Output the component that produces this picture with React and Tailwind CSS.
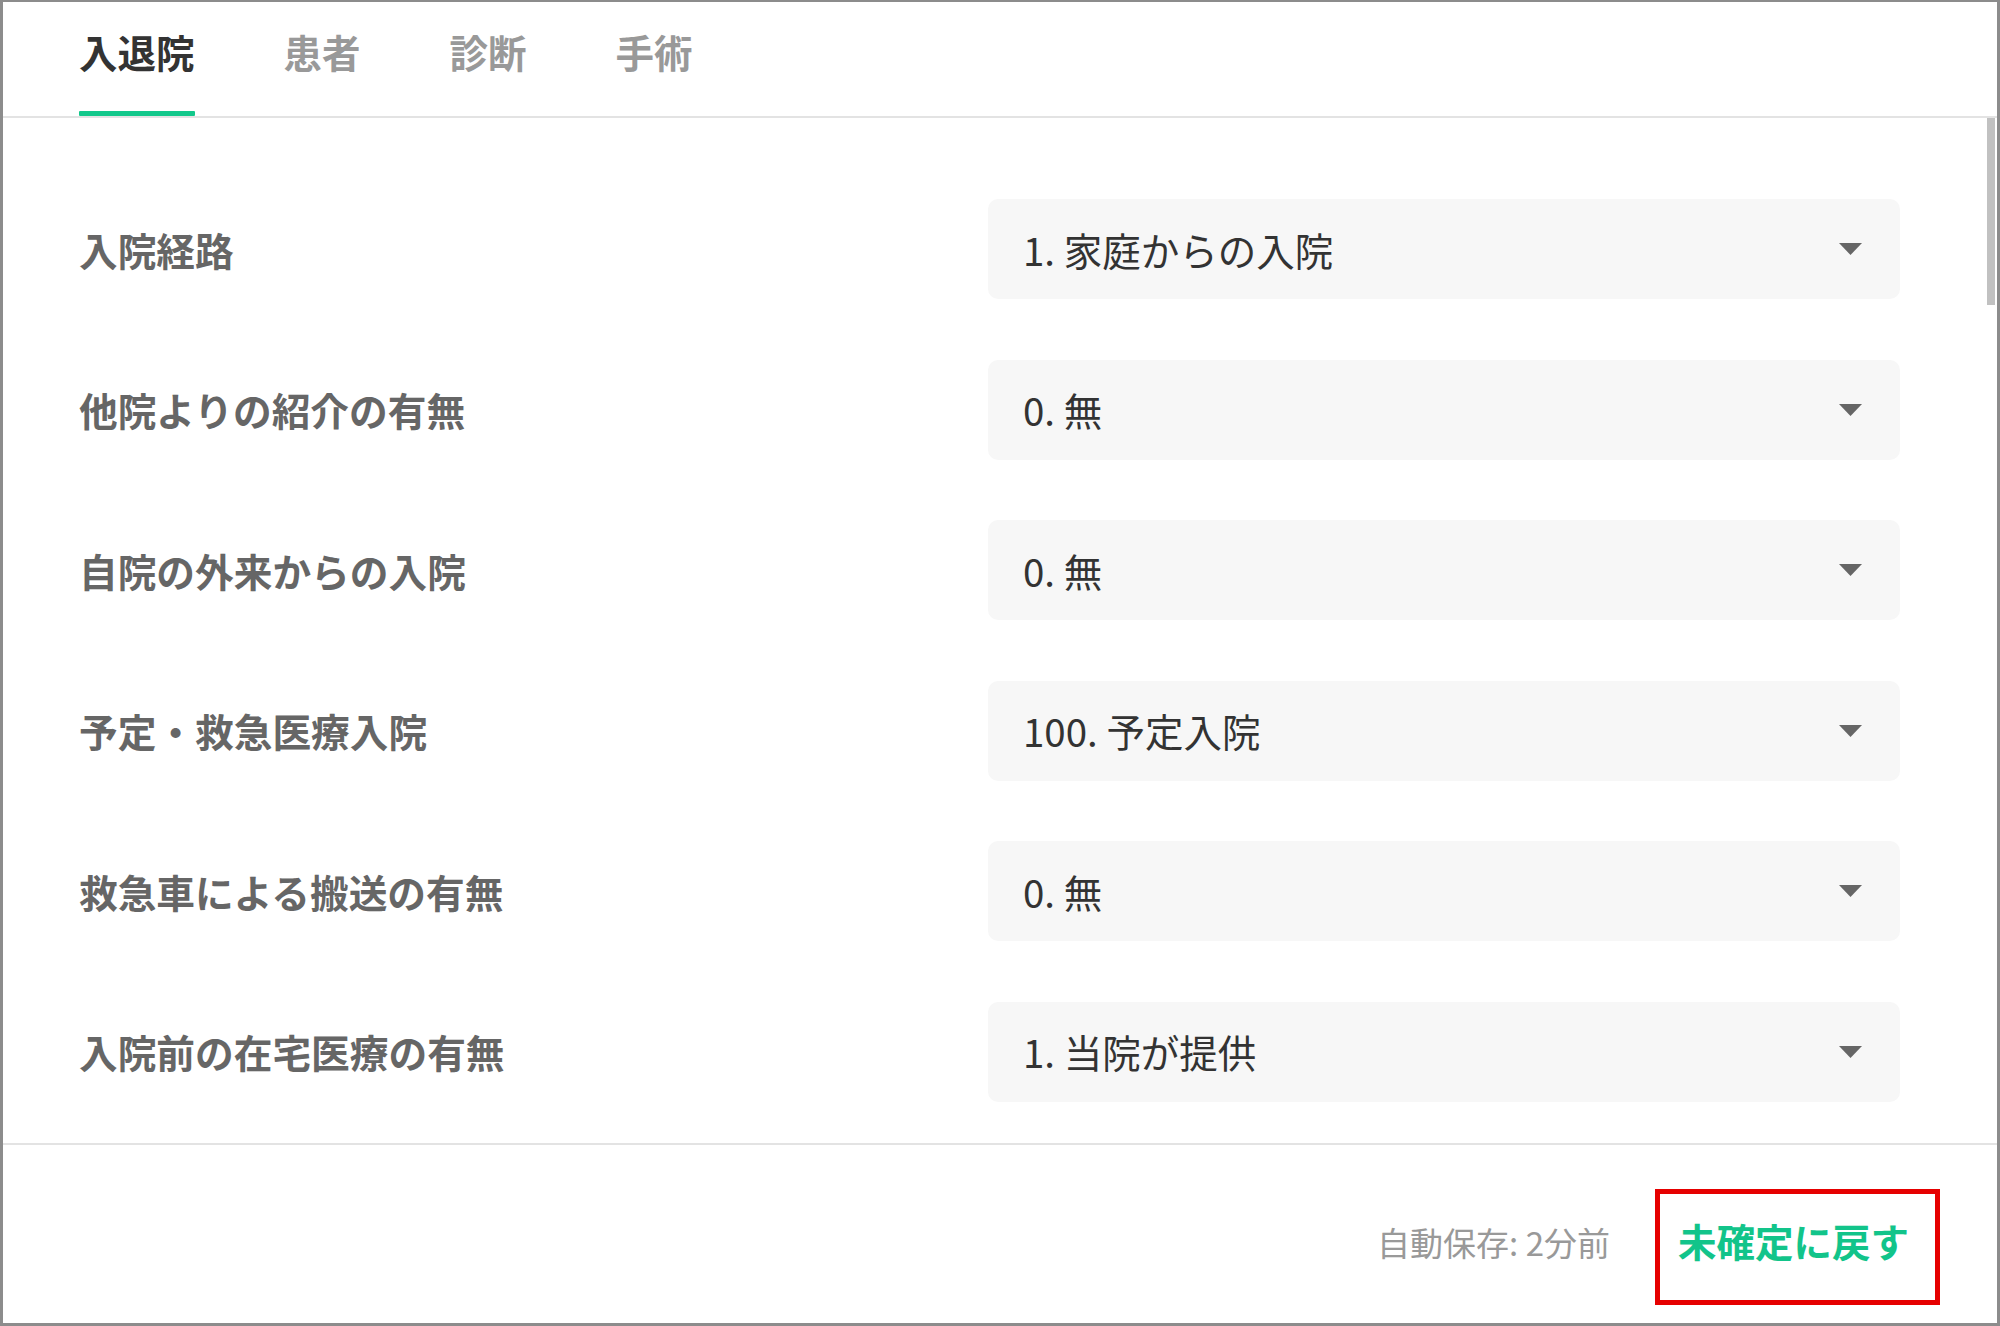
const tabs = ["入退院", "患者", "診断", "手術"];

const rows = [
  { label: "入院経路", value: "1. 家庭からの入院" },
  { label: "他院よりの紹介の有無", value: "0. 無" },
  { label: "自院の外来からの入院", value: "0. 無" },
  { label: "予定・救急医療入院", value: "100. 予定入院" },
  { label: "救急車による搬送の有無", value: "0. 無" },
  { label: "入院前の在宅医療の有無", value: "1. 当院が提供" },
];

const Caret = () => (
  <svg width="23" height="12" viewBox="0 0 23 12" className="shrink-0">
    <path d="M0 0 H23 L11.5 12 Z" fill="#666" />
  </svg>
);

const SelectRow = ({ label, value }) => (
  <div className="flex items-center justify-between h-[100px]">
    <span className="text-[38.7px] font-bold text-[#666] leading-none">{label}</span>
    <div className="w-[912px] h-[100px] rounded-[10px] bg-[#f7f7f7] flex items-center justify-between pl-[35px] pr-[38px]">
      <span className="text-[38.5px] text-[#333] leading-none">{value}</span>
      <Caret />
    </div>
  </div>
);

export default function App() {
  return (
    <div
      className="w-[2000px] h-[1326px] bg-white border-[3px] border-t-2 border-[#8c8c8c] flex flex-col overflow-hidden"
      style={{ fontFamily: '"Noto Sans CJK JP", "Noto Sans", sans-serif' }}
    >
      <div className="h-[116px] shrink-0 border-b-2 border-[#e3e3e3] flex px-[76px] gap-[89px]">
        {tabs.map((t, i) => (
          <div key={t} className="h-full flex flex-col">
            <div
              className={`flex-1 flex items-center pb-[10px] text-[38.5px] font-bold leading-none ${
                i === 0 ? "text-[#333]" : "text-[#999]"
              }`}
            >
              {t}
            </div>
            <div className={`h-[5px] rounded-[1px] ${i === 0 ? "bg-[#12c88b]" : ""}`} />
          </div>
        ))}
      </div>

      <div className="flex-1 relative overflow-hidden pl-[76px] pr-[97px] pt-[81px]">
        <div className="flex flex-col gap-[60.5px]">
          {rows.map((r) => (
            <SelectRow key={r.label} {...r} />
          ))}
        </div>
        <div className="absolute right-[2px] top-0 w-[8px] h-[187px] bg-[#c1c1c1]" />
      </div>

      <div className="h-[180px] shrink-0 border-t-2 border-[#e3e3e3] flex items-start justify-end gap-[45px] pr-[57px] pt-[44px]">
        <div className="h-[116px] flex items-center pb-[10px]">
          <span className="text-[33px] text-[#999] leading-none">自動保存: 2分前</span>
        </div>
        <div className="h-[116px] border-[5px] border-[#e60000] flex items-center pl-[18px] pr-[26px] pb-[14px]">
          <span className="text-[38.5px] font-bold text-[#12c48a] leading-none">未確定に戻す</span>
        </div>
      </div>
    </div>
  );
}
